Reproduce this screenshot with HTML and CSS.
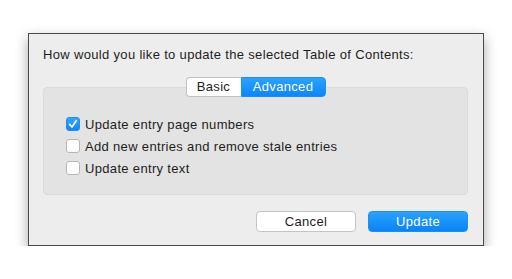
FILE: index.html
```html
<!DOCTYPE html>
<html lang="en">
<head>
    <meta charset="UTF-8">
    <title>Update Table of Contents</title>
    <link rel="stylesheet" href="styles.css">
</head>
<body>
    <!-- Dialog -->
    <div class="dialogo">
        <p class="pregunta">How would you like to update the selected Table of Contents:</p>

        <div class="pestanas">
            <span class="pestana">Basic</span>
            <span class="pestana activa">Advanced</span>
        </div>

        <div class="grupo">
            <label class="opcion">
                <span class="casilla marcada">
                    <svg width="14" height="14" viewBox="0 0 14 14"><path d="M3.6 7.4 L6 10 L10.4 3.6" fill="none" stroke="#fff" stroke-width="1.7" stroke-linecap="round" stroke-linejoin="round"/></svg>
                </span>
                Update entry page numbers
            </label>
            <label class="opcion">
                <span class="casilla"></span>
                Add new entries and remove stale entries
            </label>
            <label class="opcion">
                <span class="casilla"></span>
                Update entry text
            </label>
        </div>

        <div class="botones">
            <button class="boton">Cancel</button>
            <button class="boton primario">Update</button>
        </div>
    </div>
</body>
</html>
```

FILE: styles.css
```css
/* Page */
body {
    margin: 0;
    background-color: #ffffff;
    font-family: "Liberation Sans", Arial, sans-serif;
    font-size: 13px;
    letter-spacing: 0.33px;
    color: #1e1e1e;
}

/* Dialog window */
.dialogo {
    box-sizing: border-box;
    width: 456px;
    height: 213px;
    margin: 33px 0 0 28px;
    padding: 13px 15px 0 14px;
    background-color: #ededed;
    border: 1px solid #4a4a4a;
    box-shadow: 0 5px 12px rgba(0, 0, 0, 0.35);
}

.pregunta {
    margin: 0;
    line-height: 16px;
}

/* Segmented control */
.pestanas {
    display: flex;
    justify-content: center;
    margin: 14px 0 -10px 0;
    position: relative;
    z-index: 2;
}

.pestana {
    box-sizing: border-box;
    height: 20px;
    line-height: 18px;
    padding: 0;
    background-color: #ffffff;
    border: 1px solid #c2c2c2;
    border-right: none;
    border-radius: 4px 0 0 4px;
    color: #1e1e1e;
    width: 55px;
    text-align: center;
}

.pestana.activa {
    width: 85px;
    background: linear-gradient(#2ba2fd, #0c86f7);
    border: 1px solid #1a8ff8;
    border-radius: 0 4px 4px 0;
    color: #ffffff;
}

/* Option group */
.grupo {
    box-sizing: border-box;
    height: 108px;
    padding: 28px 0 0 22px;
    background-color: #e3e3e3;
    border: 1px solid #dadada;
    border-radius: 4px;
    display: flex;
    flex-direction: column;
    gap: 6px;
}

.opcion {
    display: flex;
    align-items: center;
    gap: 5px;
    height: 16px;
}

.casilla {
    box-sizing: border-box;
    width: 14px;
    height: 14px;
    background-color: #ffffff;
    border: 1px solid #b6b6b6;
    border-radius: 3px;
    display: flex;
}

.casilla.marcada {
    background: linear-gradient(#35a6fe, #0d87f8);
    border-color: #1a8ff8;
}

.casilla svg {
    margin: -1px;
}

/* Buttons */
.botones {
    display: flex;
    justify-content: flex-end;
    gap: 12px;
    margin-top: 16px;
}

.boton {
    box-sizing: border-box;
    width: 100px;
    height: 21px;
    padding: 0;
    font-family: inherit;
    font-size: 13px;
    letter-spacing: 0.33px;
    color: #1e1e1e;
    background-color: #ffffff;
    border: 1px solid #c4c4c4;
    border-radius: 4px;
}

.boton.primario {
    background: linear-gradient(#2aa2fd, #0a83f7);
    border-color: #1a8ff8;
    color: #ffffff;
}
```
